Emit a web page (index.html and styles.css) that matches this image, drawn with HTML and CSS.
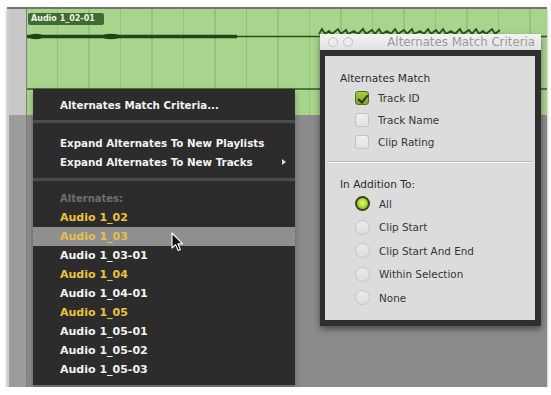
FILE: index.html
```html
<!DOCTYPE html>
<html lang="en">
<head>
    <meta charset="UTF-8">
    <title>Alternates Match Criteria</title>
    <link rel="stylesheet" href="styles.css">
</head>
<body>
    <div class="screen">
        <div class="ruler"></div>

        <div class="edit">
            <div class="track">
                <div class="clip-name">Audio 1_02-01</div>
                <svg class="wave" viewBox="0 0 520 63" preserveAspectRatio="none">
                    <path d="M0 11.5H210" stroke="#1e4716" stroke-width="3.4" fill="none"/>
                    <ellipse cx="9" cy="11.5" rx="7" ry="2.7" fill="#1e4716"/>
                    <ellipse cx="84" cy="11.5" rx="9" ry="2.7" fill="#1e4716"/>
                    <path d="M210 11.5H520" stroke="#24501b" stroke-width="1.4" fill="none"/>
                    <path d="M292 9l3-5 3 5 4-3 3 3 6-5 3 5 5-4 2 4 6-3 4 3 5-5 3 5 6-4 3 4 4-5 3 5 5-3 4 3 4-5 3 5 6-4 3 4 5-5 2 5 6-3 4 3 4-5 3 5 5-4 3 4 4-5 3 5 5-3 4 3 5-5 3 5 6-4 3 4 4-5 3 5 4-3 3 3 6-5 3 5 5-4" stroke="#24501b" stroke-width="1.8" fill="none"/>
                </svg>
                <div class="split"></div>
            </div>

            <div class="menu">
                <div class="menu-group">
                    <div class="menu-item">Alternates Match Criteria...</div>
                </div>
                <div class="menu-group actions">
                    <div class="menu-item">Expand Alternates To New Playlists</div>
                    <div class="menu-item">Expand Alternates To New Tracks<span class="sub-arrow"></span></div>
                </div>
                <div class="menu-group takes">
                    <div class="menu-heading">Alternates:</div>
                    <div class="menu-item take match">Audio 1_02</div>
                    <div class="menu-item take match hover">Audio 1_03</div>
                    <div class="menu-item take">Audio 1_03-01</div>
                    <div class="menu-item take match">Audio 1_04</div>
                    <div class="menu-item take">Audio 1_04-01</div>
                    <div class="menu-item take match">Audio 1_05</div>
                    <div class="menu-item take">Audio 1_05-01</div>
                    <div class="menu-item take">Audio 1_05-02</div>
                    <div class="menu-item take">Audio 1_05-03</div>
                </div>
            </div>

            <div class="dialog">
                <div class="titlebar">
                    <span class="light"></span>
                    <span class="light"></span>
                    <span class="title">Alternates Match Criteria</span>
                </div>
                <div class="panel">
                    <div class="group-label">Alternates Match</div>
                    <div class="option"><span class="check on"></span>Track ID</div>
                    <div class="option"><span class="check"></span>Track Name</div>
                    <div class="option"><span class="check"></span>Clip Rating</div>

                    <div class="divider"></div>

                    <div class="group-label addition">In Addition To:</div>
                    <div class="option tall"><span class="radio on"></span>All</div>
                    <div class="option tall"><span class="radio"></span>Clip Start</div>
                    <div class="option tall"><span class="radio"></span>Clip Start And End</div>
                    <div class="option tall"><span class="radio"></span>Within Selection</div>
                    <div class="option tall"><span class="radio"></span>None</div>
                </div>
            </div>

            <svg class="cursor" viewBox="0 0 12 20">
                <path d="M1 1V16L4.6 12.6L7.2 18.6L9.4 17.6L6.9 11.8H11.6Z" fill="#111" stroke="#fff" stroke-width="1.1" stroke-linejoin="round"/>
            </svg>
        </div>
    </div>
</body>
</html>
```

FILE: styles.css
```css
* {
    margin: 0;
    padding: 0;
    box-sizing: border-box;
}

body {
    background: #fff;
    font-family: "DejaVu Sans", Verdana, sans-serif;
}

.screen {
    margin: 7px 0 0 7px;
    width: 540px;
    height: 380px;
    display: grid;
    grid-template-columns: 20px 1fr;
    background: #8b8b8b;
    border-top: 2px solid #737373;
    box-shadow: 0 2px 3px rgba(0, 0, 0, 0.35);
    overflow: hidden;
}

.ruler {
    background: linear-gradient(#c8c8c8 0 106px, #9c9c9c 106px);
    border-left: 2px solid #cfcfcf;
    border-right: 1px solid #7e7e7e;
}

.edit {
    position: relative;
}

/* green clip area */
.track {
    height: 106px;
    display: flex;
    flex-direction: column;
    background-color: #a9d48d;
    background-image: repeating-linear-gradient(90deg, transparent 0 30px, rgba(70, 125, 50, 0.2) 30px 31.5px);
}

.clip-name {
    margin: 4px 0 0 1px;
    width: 76px;
    height: 12px;
    padding-left: 3px;
    background: #3e6b32;
    border-radius: 2px;
    color: #eef5e6;
    font-size: 8px;
    font-weight: bold;
    line-height: 12px;
}

.wave {
    display: block;
    width: 100%;
    height: 63px;
}

.split {
    height: 2px;
    background: #4f7541;
}

/* context menu */
.menu {
    position: absolute;
    left: 6px;
    top: 80px;
    width: 262px;
    display: flex;
    flex-direction: column;
    gap: 3px;
    background: #4b4b4b;
    box-shadow: 0 3px 6px rgba(0, 0, 0, 0.3);
}

.menu-group {
    background: #2c2c2c;
    padding: 6px 0;
}

.menu-group.actions {
    padding: 10px 0 7px;
}

.menu-group.takes {
    padding: 8px 0 6px;
}

.menu-item,
.menu-heading {
    height: 19px;
    display: flex;
    align-items: center;
    padding-left: 27px;
    color: #f2f2f2;
    font-size: 10.3px;
    font-weight: bold;
}

.menu-heading {
    color: #6f6f6f;
    font-size: 10px;
}

.take {
    font-size: 11px;
}

.take.match {
    color: #ecc33c;
}

.menu-item.hover {
    background: #8f8f8f;
    color: #e6c04a;
}

.sub-arrow {
    margin-left: auto;
    margin-right: 9px;
    border-left: 4px solid #dcdcdc;
    border-top: 3px solid transparent;
    border-bottom: 3px solid transparent;
}

/* dialog */
.dialog {
    position: absolute;
    left: 293px;
    top: 25px;
    width: 221px;
    box-shadow: 0 3px 6px rgba(0, 0, 0, 0.45);
}

.titlebar {
    height: 16px;
    display: flex;
    align-items: center;
    gap: 5px;
    padding: 0 6px 0 8px;
    background: linear-gradient(#f3f3f3, #e1e1e1);
}

.light {
    width: 10px;
    height: 10px;
    border-radius: 50%;
    border: 1px solid #c4c4c4;
    background: #ececec;
}

.title {
    margin-left: auto;
    color: #9a9a9a;
    font-size: 11.8px;
    white-space: nowrap;
}

.panel {
    height: 276px;
    padding-top: 13px;
    background: #dcdcdc;
    border: solid #2f2f2f;
    border-width: 6px 6px 6px 5px;
}

.group-label {
    height: 18px;
    line-height: 18px;
    padding-left: 15px;
    color: #2c2c2c;
    font-size: 10.6px;
}

.group-label.addition {
    margin-top: 13px;
    height: 16px;
    line-height: 16px;
}

.option {
    height: 22px;
    display: flex;
    align-items: center;
    gap: 9px;
    padding-left: 30px;
    color: #363636;
    font-size: 10.4px;
}

.option.tall {
    height: 23.5px;
}

.check {
    width: 14px;
    height: 14px;
    border-radius: 3px;
    border: 1px solid #c2c2c2;
    background: linear-gradient(#f0f0f0, #e2e2e2);
    position: relative;
}

.check.on {
    border-color: #566f1c;
    background: linear-gradient(#a6cc45, #7ea52a);
}

.check.on::after {
    content: "";
    position: absolute;
    left: 4px;
    top: 1px;
    width: 4px;
    height: 8px;
    border: solid #2b3510;
    border-width: 0 2px 2px 0;
    transform: rotate(40deg);
}

.divider {
    margin: 8px 2px 0;
    border-top: 1px solid #bcbcbc;
    border-bottom: 1px solid #f4f4f4;
}

.radio {
    width: 15px;
    height: 15px;
    border-radius: 50%;
    border: 1px solid #c3c3c3;
    background: linear-gradient(#ebebeb, #dedede);
}

.radio.on {
    border: 2px solid #3a4220;
    background: radial-gradient(circle at 50% 45%, #e4fb7a 0, #b3dc3a 45%, #6f9a1c 100%);
}

.cursor {
    position: absolute;
    left: 144px;
    top: 223px;
    width: 12px;
    height: 20px;
}
```
